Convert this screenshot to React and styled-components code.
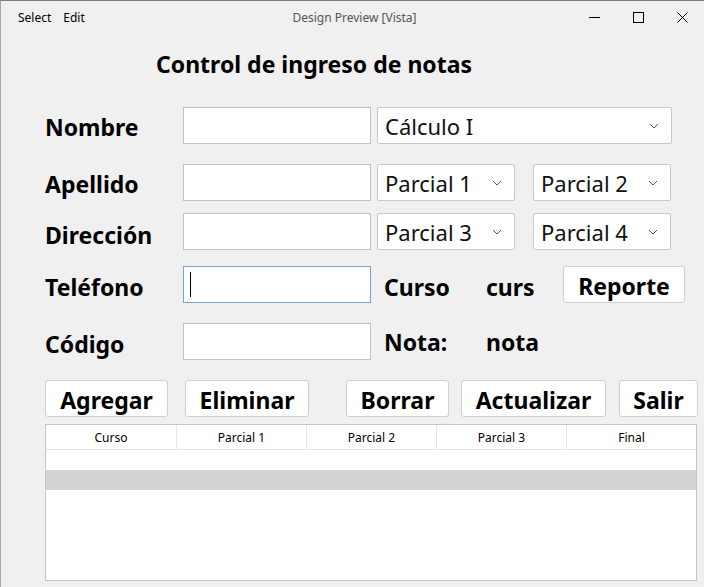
import React from 'react';
import styled, { createGlobalStyle } from 'styled-components';

const GlobalStyle = createGlobalStyle`
  html, body {
    margin: 0;
    padding: 0;
    background: #f0f0f0;
  }
  * {
    box-sizing: border-box;
  }
`;

const Window = styled.div`
  width: 704px;
  height: 587px;
  background: #f0f0f0;
  border-top: 1px solid #7a7a7a;
  border-left: 1px solid #a8a8a8;
  font-family: "Noto Sans", "Open Sans", sans-serif;
  color: #000;
  overflow: hidden;
`;

const TitleBar = styled.div`
  height: 32px;
  display: grid;
  grid-template-columns: 1fr auto 1fr;
  align-items: center;
  font-size: 12px;
`;

const Menu = styled.div`
  display: flex;
  gap: 12px;
  padding-left: 17px;
  color: #000;
`;

const WindowTitle = styled.div`
  color: #555;
  padding-left: 4px;
`;

const Controls = styled.div`
  display: flex;
  justify-content: flex-end;
`;

const ControlButton = styled.div`
  width: 44px;
  height: 32px;
  display: flex;
  align-items: center;
  justify-content: center;
`;

const Heading = styled.h1`
  margin: 16px 0 0 155px;
  font-size: 23px;
  line-height: 30px;
  font-weight: 700;
`;

const Form = styled.div`
  margin-top: 28px;
`;

const Row = styled.div`
  display: flex;
  align-items: center;
  height: 37px;
  margin-top: ${(p) => p.$top || 0}px;
  padding-left: 44px;
`;

const Label = styled.div`
  width: ${(p) => p.$width}px;
  margin-left: ${(p) => p.$ml || 0}px;
  font-size: 23px;
  font-weight: 700;
  padding-top: ${(p) => p.$pt ?? 4}px;
  white-space: nowrap;
`;

const TextBox = styled.div`
  width: 188px;
  height: 37px;
  background: #fff;
  border: 1px solid ${(p) => (p.$focused ? '#7aa3d4' : '#c2c2c2')};
  display: flex;
  align-items: center;
  padding-left: 6px;
`;

const Caret = styled.span`
  width: 1px;
  height: 25px;
  background: #000;
`;

const Combo = styled.div`
  width: ${(p) => p.$width}px;
  height: 37px;
  margin-left: ${(p) => p.$ml || 0}px;
  background: #fff;
  border: 1px solid #c8c8c8;
  border-radius: 2px;
  display: flex;
  align-items: center;
  justify-content: space-between;
  padding: 0 12px 0 7px;
  font-size: 22px;
  color: #111;
`;

const Button = styled.div`
  width: ${(p) => p.$width}px;
  height: 37px;
  margin-left: ${(p) => p.$ml || 0}px;
  background: #fff;
  border: 1px solid #cfcfcf;
  border-radius: 3px;
  display: flex;
  align-items: center;
  justify-content: center;
  font-size: 23px;
  font-weight: 700;
  padding-top: 2px;
`;

const Table = styled.div`
  margin: 7px 0 0 44px;
  width: 652px;
  height: 157px;
  background: #fff;
  border: 1px solid #c6c6c6;
`;

const HeaderRow = styled.div`
  display: grid;
  grid-template-columns: repeat(5, 1fr);
  height: 25px;
  border-bottom: 1px solid #e3e3e3;
`;

const HeaderCell = styled.div`
  display: flex;
  align-items: center;
  justify-content: center;
  font-size: 12px;
  border-left: ${(p) => (p.$first ? 'none' : '1px solid #e6e6e6')};
`;

const DataRow = styled.div`
  height: ${(p) => p.$h}px;
  background: ${(p) => (p.$selected ? '#d3d3d3' : '#fff')};
`;

const Chevron = () => (
  <svg width="10" height="6" viewBox="0 0 10 6">
    <polyline points="1,1 5,5 9,1" fill="none" stroke="#555" strokeWidth="1" />
  </svg>
);

const App = () => {
  return (
    <>
      <GlobalStyle />
      <Window>
        <TitleBar>
          <Menu>
            <span>Select</span>
            <span>Edit</span>
          </Menu>
          <WindowTitle>Design Preview [Vista]</WindowTitle>
          <Controls>
            <ControlButton>
              <svg width="11" height="11" viewBox="0 0 11 11">
                <line x1="0" y1="5.5" x2="11" y2="5.5" stroke="#000" strokeWidth="1" />
              </svg>
            </ControlButton>
            <ControlButton>
              <svg width="11" height="11" viewBox="0 0 11 11">
                <rect x="0.5" y="0.5" width="10" height="10" fill="none" stroke="#000" strokeWidth="1" />
              </svg>
            </ControlButton>
            <ControlButton>
              <svg width="11" height="11" viewBox="0 0 11 11">
                <line x1="0.5" y1="0.5" x2="10.5" y2="10.5" stroke="#000" strokeWidth="1" />
                <line x1="10.5" y1="0.5" x2="0.5" y2="10.5" stroke="#000" strokeWidth="1" />
              </svg>
            </ControlButton>
          </Controls>
        </TitleBar>

        <Heading>Control de ingreso de notas</Heading>

        <Form>
          <Row>
            <Label $width={138} $pt={3}>Nombre</Label>
            <TextBox />
            <Combo $width={295} $ml={6}>
              Cálculo I
              <Chevron />
            </Combo>
          </Row>
          <Row $top={20}>
            <Label $width={138} $pt={3}>Apellido</Label>
            <TextBox />
            <Combo $width={138} $ml={6}>
              Parcial 1
              <Chevron />
            </Combo>
            <Combo $width={138} $ml={18}>
              Parcial 2
              <Chevron />
            </Combo>
          </Row>
          <Row $top={12}>
            <Label $width={138} $pt={7}>Dirección</Label>
            <TextBox />
            <Combo $width={138} $ml={6}>
              Parcial 3
              <Chevron />
            </Combo>
            <Combo $width={138} $ml={18}>
              Parcial 4
              <Chevron />
            </Combo>
          </Row>
          <Row $top={16}>
            <Label $width={138} $pt={4}>Teléfono</Label>
            <TextBox $focused>
              <Caret />
            </TextBox>
            <Label $width={102} $ml={13} $pt={4}>Curso</Label>
            <Label $width={77} $pt={4}>curs</Label>
            <Button $width={122}>Reporte</Button>
          </Row>
          <Row $top={20}>
            <Label $width={138} $pt={5}>Código</Label>
            <TextBox />
            <Label $width={102} $ml={13} $pt={0}>Nota:</Label>
            <Label $width={77} $pt={0}>nota</Label>
          </Row>
          <Row $top={20}>
            <Button $width={123}>Agregar</Button>
            <Button $width={124} $ml={17}>Eliminar</Button>
            <Button $width={103} $ml={37}>Borrar</Button>
            <Button $width={145} $ml={12}>Actualizar</Button>
            <Button $width={79} $ml={13}>Salir</Button>
          </Row>
        </Form>

        <Table>
          <HeaderRow>
            {['Curso', 'Parcial 1', 'Parcial 2', 'Parcial 3', 'Final'].map((h, i) => (
              <HeaderCell key={h} $first={i === 0}>{h}</HeaderCell>
            ))}
          </HeaderRow>
          <DataRow $h={20} />
          <DataRow $h={20} $selected />
        </Table>
      </Window>
    </>
  );
};

export default App;
